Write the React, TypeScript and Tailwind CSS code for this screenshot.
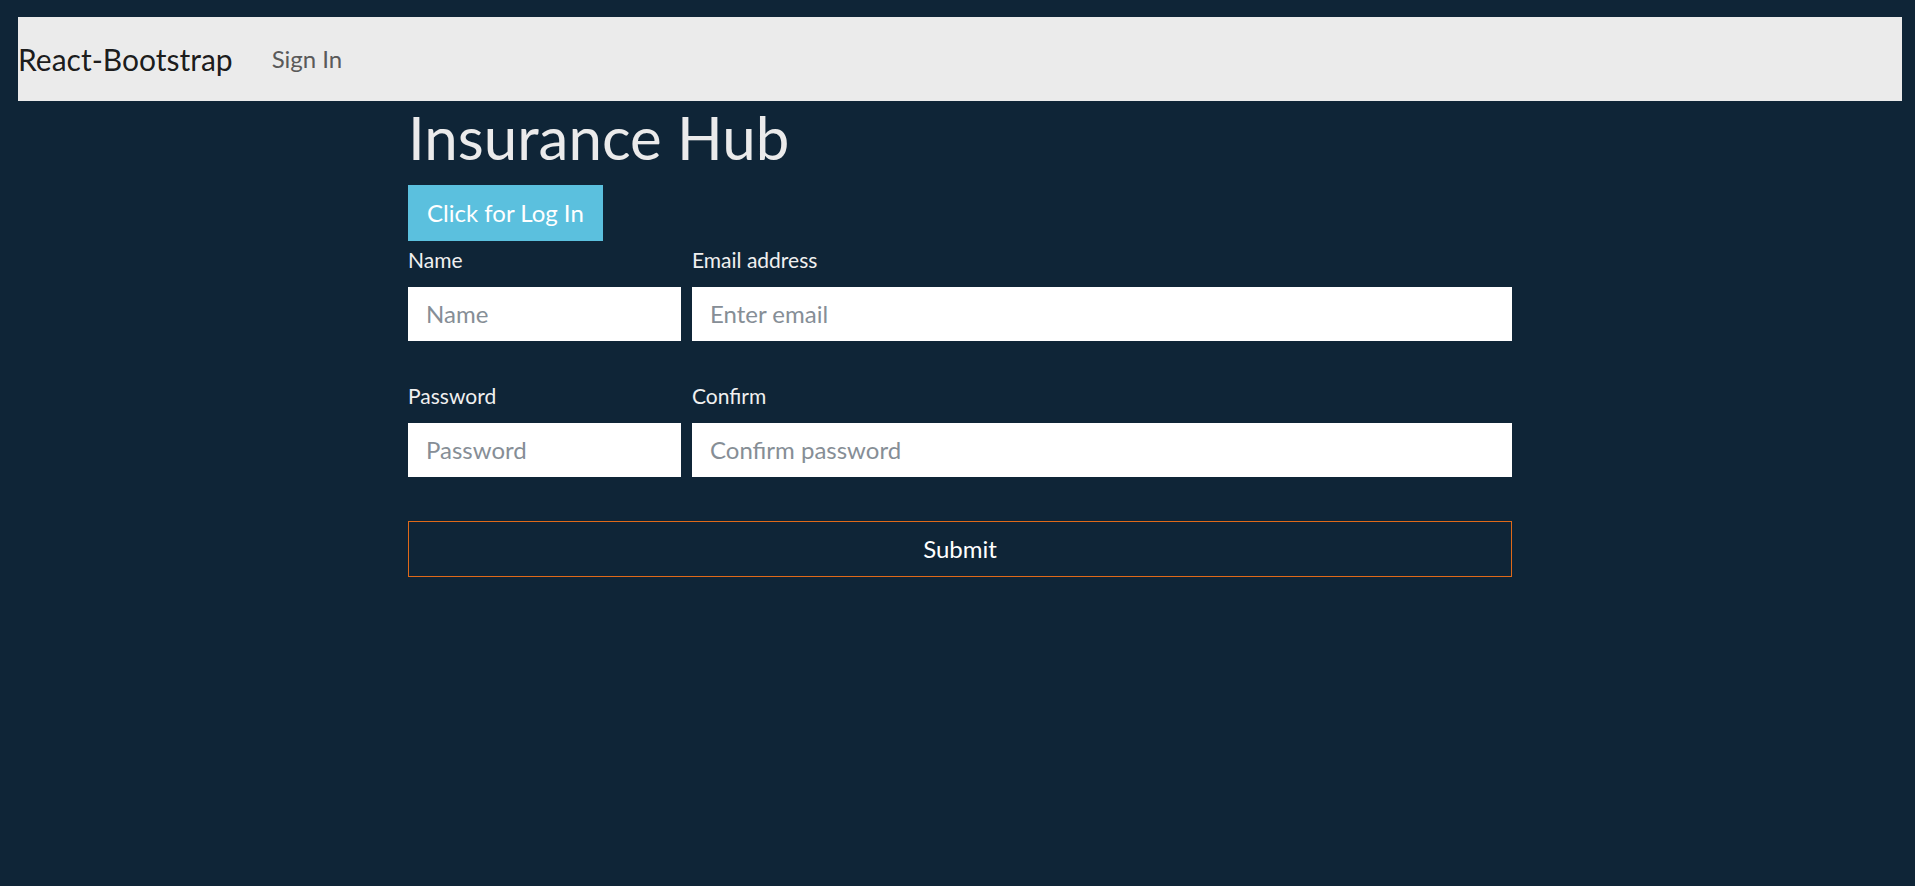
const FONT = "font-['Lato','Liberation_Sans',sans-serif]";

function Field({ label, placeholder, type = 'text', className = '' }: { label: string; placeholder: string; type?: string; className?: string }) {
  return (
    <div className={`flex flex-col ${className}`}>
      <label className="text-[21px] leading-[30px] text-[#f0f0f0] mb-[12px]">{label}</label>
      <input
        type={type}
        placeholder={placeholder}
        className="h-[54px] bg-white px-[18px] pb-[1px] text-[24px] text-[#495057] placeholder:text-[#868e96] outline-none border-0"
      />
    </div>
  );
}

export default function App() {
  return (
    <div className={`${FONT} min-h-[886px] bg-[#0f2537] pt-[17px]`}>
      {/* Navbar */}
      <nav className="ml-[18px] mr-[13px] h-[84px] bg-[#ebebeb] flex items-center">
        <span className="text-[30px] leading-[45px] text-black/90">React-Bootstrap</span>
        <a className="ml-[39px] text-[24px] leading-[36px] text-[#5a5a5a]">Sign In</a>
      </nav>

      <main className="ml-[408px] w-[1104px]">
        <h1 className="text-[60px] leading-[72px] text-[#ebebeb] mb-[12px]">Insurance Hub</h1>
        <button className="h-[56px] px-[18px] bg-[#5bc0de] border border-[#5bc0de] text-white text-[24px] leading-[36px]">
          Click for Log In
        </button>

        <form className="mt-[4px] flex flex-col">
          <div className="flex gap-[11px]">
            <Field label="Name" placeholder="Name" className="w-[273px]" />
            <Field label="Email address" placeholder="Enter email" type="email" className="flex-1" />
          </div>
          <div className="flex gap-[11px] mt-[40px]">
            <Field label="Password" placeholder="Password" type="password" className="w-[273px]" />
            <Field label="Confirm" placeholder="Confirm password" type="password" className="flex-1" />
          </div>
          <button
            type="button"
            className="mt-[44px] h-[56px] border border-[#df6919] text-white text-[24px] leading-[36px]"
          >
            Submit
          </button>
        </form>
      </main>
    </div>
  );
}
